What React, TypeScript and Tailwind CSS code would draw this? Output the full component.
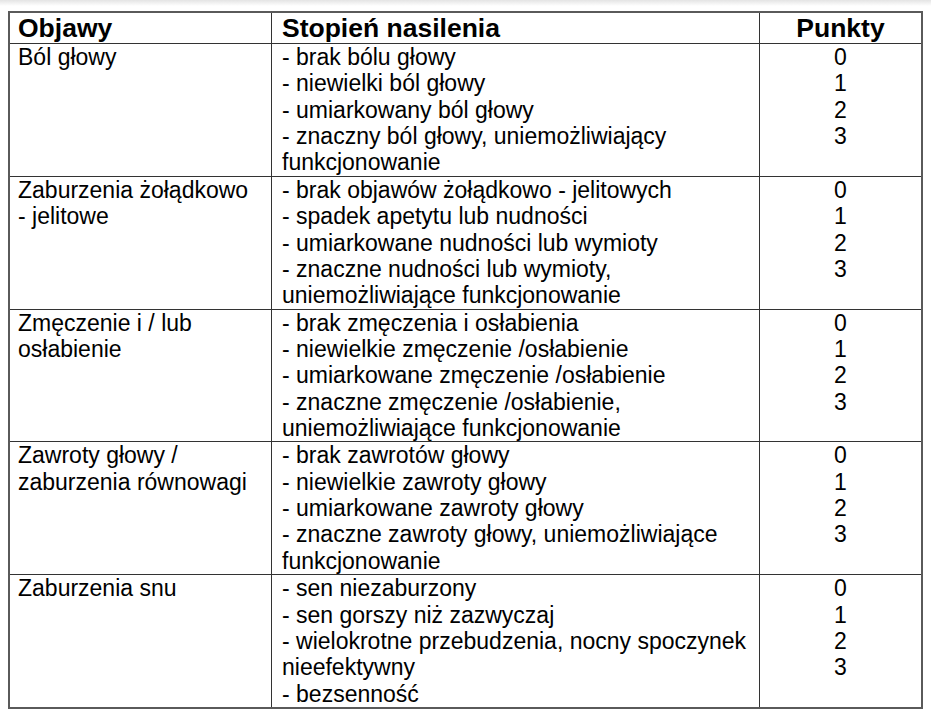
const rows: { symptom: string[]; levels: string[]; points: string[] }[] = [
  {
    symptom: ['Ból głowy'],
    levels: [
      '- brak bólu głowy',
      '- niewielki ból głowy',
      '- umiarkowany ból głowy',
      '- znaczny ból głowy, uniemożliwiający',
      'funkcjonowanie',
    ],
    points: ['0', '1', '2', '3'],
  },
  {
    symptom: ['Zaburzenia żołądkowo', '- jelitowe'],
    levels: [
      '- brak objawów żołądkowo - jelitowych',
      '- spadek apetytu lub nudności',
      '- umiarkowane nudności lub wymioty',
      '- znaczne nudności lub wymioty,',
      'uniemożliwiające funkcjonowanie',
    ],
    points: ['0', '1', '2', '3'],
  },
  {
    symptom: ['Zmęczenie i / lub', 'osłabienie'],
    levels: [
      '- brak zmęczenia i osłabienia',
      '- niewielkie zmęczenie /osłabienie',
      '- umiarkowane zmęczenie /osłabienie',
      '- znaczne zmęczenie /osłabienie,',
      'uniemożliwiające funkcjonowanie',
    ],
    points: ['0', '1', '2', '3'],
  },
  {
    symptom: ['Zawroty głowy /', 'zaburzenia równowagi'],
    levels: [
      '- brak zawrotów głowy',
      '- niewielkie zawroty głowy',
      '- umiarkowane zawroty głowy',
      '- znaczne zawroty głowy, uniemożliwiające',
      'funkcjonowanie',
    ],
    points: ['0', '1', '2', '3'],
  },
  {
    symptom: ['Zaburzenia snu'],
    levels: [
      '- sen niezaburzony',
      '- sen gorszy niż zazwyczaj',
      '- wielokrotne przebudzenia, nocny spoczynek',
      'nieefektywny',
      '- bezsenność',
    ],
    points: ['0', '1', '2', '3'],
  },
];

const Lines = ({ items }: { items: string[] }) => (
  <>
    {items.map((t, i) => (
      <div key={i} className="whitespace-pre">
        {t}
      </div>
    ))}
  </>
);

export default function App() {
  return (
    <div
      className="min-h-screen bg-white text-black"
      style={{ fontFamily: '"Liberation Sans", Arial, sans-serif' }}
    >
      {/* viewer shadow at the top edge */}
      <div className="h-[6px] bg-gradient-to-b from-[#e4e4e4] to-white" />

      <div className="ml-[8px] mt-[5px] w-[915px] border-2 border-[#5a5a5a]">
        {/* header */}
        <div className="grid grid-cols-[261px_488px_1fr] text-[26.5px] font-bold leading-[30px]">
          <div className="pl-[8px]">Objawy</div>
          <div className="border-l border-[#333] pl-[10px]">Stopień nasilenia</div>
          <div className="border-l border-[#333] text-center">Punkty</div>
        </div>

        {rows.map((r, i) => (
          <div
            key={i}
            className="grid grid-cols-[261px_488px_1fr] border-t border-[#333] text-[23px] leading-[26.36px]"
          >
            <div className="pl-[8px]">
              <Lines items={r.symptom} />
            </div>
            <div className="border-l border-[#333] pl-[10px]">
              <Lines items={r.levels} />
            </div>
            <div className="border-l border-[#333] text-center">
              <Lines items={r.points} />
            </div>
          </div>
        ))}
      </div>
    </div>
  );
}
